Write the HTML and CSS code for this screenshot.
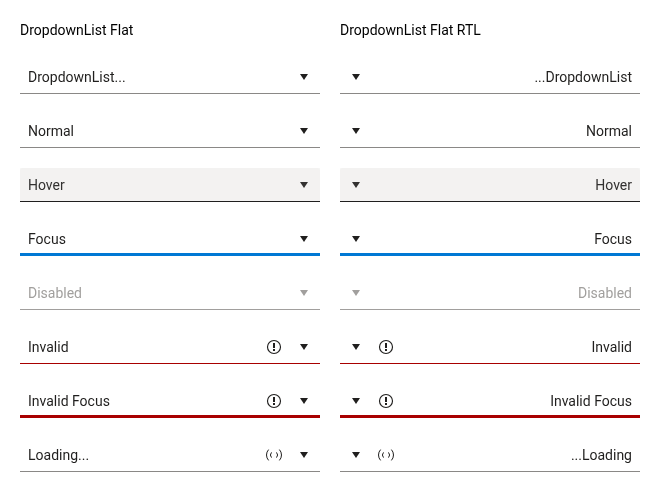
FILE: index.html
```html
<!DOCTYPE html>
<html lang="en">
<head>
<meta charset="utf-8">
<title>DropdownList Flat</title>
<link rel="stylesheet" href="styles.css">
</head>
<body>
<svg class="defs" width="0" height="0" aria-hidden="true">
  <symbol id="caret" viewBox="0 0 16 16"><path d="M4 5h8l-4 6z"/></symbol>
  <symbol id="invalid" viewBox="0 0 16 16"><circle cx="8" cy="8" r="6.500" fill="none" stroke="currentColor" stroke-width="1.150"/><path d="M7 4h2v5H7zM7 10h2v2H7z"/></symbol>
  <symbol id="loading" viewBox="0 0 16 16"><path d="M2.600 2.600A8 8 0 0 0 2.600 13.400M13.400 2.600A8 8 0 0 1 13.400 13.400M5.500 5.400A4 4 0 0 0 5.500 10.600M10.500 5.400A4 4 0 0 1 10.500 10.600" fill="none" stroke="currentColor"/></symbol>
</svg>
<main class="grid">
  <section class="column">
    <h1 class="title">DropdownList Flat</h1>
    <div class="picker"><span class="value">DropdownList...</span><svg class="caret"><use href="#caret"/></svg></div>
    <div class="picker"><span class="value">Normal</span><svg class="caret"><use href="#caret"/></svg></div>
    <div class="picker hover"><span class="value">Hover</span><svg class="caret"><use href="#caret"/></svg></div>
    <div class="picker focus"><span class="value">Focus</span><svg class="caret"><use href="#caret"/></svg></div>
    <div class="picker disabled"><span class="value">Disabled</span><svg class="caret"><use href="#caret"/></svg></div>
    <div class="picker invalid"><span class="value">Invalid</span><svg class="status"><use href="#invalid"/></svg><svg class="caret"><use href="#caret"/></svg></div>
    <div class="picker invalid focus"><span class="value">Invalid Focus</span><svg class="status"><use href="#invalid"/></svg><svg class="caret"><use href="#caret"/></svg></div>
    <div class="picker"><span class="value">Loading...</span><svg class="status"><use href="#loading"/></svg><svg class="caret"><use href="#caret"/></svg></div>
  </section>
  <section class="column">
    <h1 class="title">DropdownList Flat RTL</h1>
    <div class="picker" dir="rtl"><span class="value">DropdownList...</span><svg class="caret"><use href="#caret"/></svg></div>
    <div class="picker" dir="rtl"><span class="value">Normal</span><svg class="caret"><use href="#caret"/></svg></div>
    <div class="picker hover" dir="rtl"><span class="value">Hover</span><svg class="caret"><use href="#caret"/></svg></div>
    <div class="picker focus" dir="rtl"><span class="value">Focus</span><svg class="caret"><use href="#caret"/></svg></div>
    <div class="picker disabled" dir="rtl"><span class="value">Disabled</span><svg class="caret"><use href="#caret"/></svg></div>
    <div class="picker invalid" dir="rtl"><span class="value">Invalid</span><svg class="status"><use href="#invalid"/></svg><svg class="caret"><use href="#caret"/></svg></div>
    <div class="picker invalid focus" dir="rtl"><span class="value">Invalid Focus</span><svg class="status"><use href="#invalid"/></svg><svg class="caret"><use href="#caret"/></svg></div>
    <div class="picker" dir="rtl"><span class="value">Loading...</span><svg class="status"><use href="#loading"/></svg><svg class="caret"><use href="#caret"/></svg></div>
  </section>
</main>
</body>
</html>
```
FILE: styles.css
```css
* { box-sizing: border-box; }
body { margin: 0; background: #fff; color: #000; font: 14px/20px Roboto, sans-serif; }
.defs { display: none; }
.grid { display: grid; grid-template-columns: 300px 300px; gap: 20px; padding: 20px; will-change: transform; }
.column { display: flex; flex-direction: column; gap: 20px; }
.title { margin: 0; font-size: 14px; font-weight: 400; line-height: 20px; }
.picker { display: flex; align-items: center; height: 34px; color: #201f1e; box-shadow: inset 0 -1px #8a8886; }
.value { flex: 1; padding: 0 8px; will-change: transform; }
.picker svg { width: 16px; height: 16px; fill: currentColor; flex: none; }
.picker .caret { margin: 0 8px; }
.picker .status { margin: 0 6px; }
.hover { color: #323130; background: #f3f2f1; border-radius: 2px 2px 0 0; box-shadow: inset 0 -1px #201f1e; }
.disabled { color: #a19f9d; box-shadow: inset 0 -1px #a19f9d; }
.focus { box-shadow: inset 0 -3px #0078d4; }
.invalid { box-shadow: inset 0 -1px #a80000; }
.invalid.focus { box-shadow: inset 0 -3px #a80000; }
```
